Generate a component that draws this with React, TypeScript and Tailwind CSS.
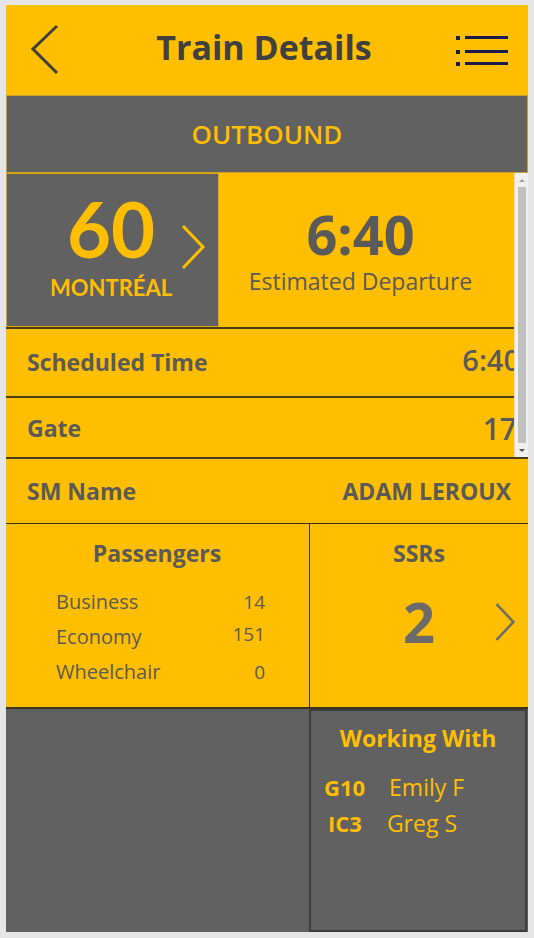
import { ReactNode } from 'react'

const YELLOW = 'bg-[#ffbf00]'

function Chevron({ className, stroke }: { className: string; stroke: string }) {
  return (
    <svg className={className} viewBox="0 0 26 46" fill="none">
      <polyline points="3,2 23,23 3,44" stroke={stroke} strokeWidth="3" strokeLinejoin="miter" />
    </svg>
  )
}

function InfoRow({ label, value, className, valueClass }: { label: string; value: string; className: string; valueClass: string }) {
  return (
    <div className={`flex items-center justify-between pl-[21px] border-t-2 border-[#4a3d1a] ${YELLOW} ${className}`}>
      <span className="text-[23px] font-bold text-[#5a5a5a]">{label}</span>
      <span className={`font-semibold text-[#5a5a5a] ${valueClass}`}>{value}</span>
    </div>
  )
}

function PaxLine({ label, value, nudge }: { label: string; value: string; nudge?: string }) {
  return (
    <div className="flex items-center justify-between h-[35px]">
      <span className="text-[20px] text-[#5a5a5a]">{label}</span>
      <span className={`text-[19px] text-[#5a5a5a] ${nudge ?? ''}`}>{value}</span>
    </div>
  )
}

function Crew({ code, name, codeClass }: { code: string; name: string; codeClass: string }): ReactNode {
  return (
    <div className="flex items-center h-[36px]">
      <span className={`text-[22px] font-bold text-[#ffbf00] ${codeClass}`}>{code}</span>
      <span className="text-[23px] text-[#ffbf00] ml-[24px]">{name}</span>
    </div>
  )
}

export default function App() {
  return (
    <div className="min-h-screen bg-[#e6e6e6] pt-[5px] pl-[6px]" style={{ fontFamily: '"Open Sans", "Liberation Sans", sans-serif' }}>
      <div className="w-[522px] h-[927px] flex flex-col bg-[#616161]">
        {/* header */}
        <div className={`h-[90px] flex items-center justify-between pl-[24px] pr-[18px] shrink-0 ${YELLOW}`}>
          <svg width="30" height="54" viewBox="0 0 30 54" fill="none">
            <polyline points="27,3 3,26 27,50" stroke="#3f3f3f" strokeWidth="3" />
          </svg>
          <h1 className="text-[34px] font-bold leading-[40px] text-[#404040] ml-[14px] mb-[6px]">Train Details</h1>
          <svg width="56" height="34" viewBox="0 0 56 34">
            <rect x="2" y="3" width="4" height="4" fill="#1b1b4b" />
            <rect x="2" y="17" width="4" height="4" fill="#1b1b4b" />
            <rect x="2" y="29" width="4" height="4" fill="#1b1b4b" />
            <rect x="11" y="3" width="43" height="3" fill="#1b1b4b" />
            <rect x="11" y="17" width="43" height="3" fill="#1b1b4b" />
            <rect x="11" y="29" width="43" height="3" fill="#1b1b4b" />
          </svg>
        </div>

        {/* direction */}
        <div className="h-[78px] shrink-0 flex items-center justify-center border border-[#c9a227]">
          <span className="text-[26px] font-semibold text-[#ffbf00]">OUTBOUND</span>
        </div>

        {/* scrolled area */}
        <div className="h-[284px] shrink-0 flex">
          <div className={`flex-1 overflow-hidden ${YELLOW}`}>
            <div className="h-[154px] flex">
              <div className="w-[213px] bg-[#616161] border border-[#e0a800] flex items-center pl-[43px]">
                <div className="flex flex-col items-center mt-[-10px]" style={{ fontFamily: 'Lato, "Open Sans", sans-serif' }}>
                  <span className="text-[76px] font-bold leading-[76px] text-[#ffbf00]">60</span>
                  <span className="text-[22px] font-bold leading-[22px] text-[#ffbf00] mt-[10px]">MONTRÉAL</span>
                </div>
                <Chevron className="w-[26px] h-[46px] ml-[8px] mb-[6px]" stroke="#ffbf00" />
              </div>
              <div className="flex-1 flex flex-col items-center justify-center pr-[12px]">
                <span className="text-[54px] font-bold leading-[60px] text-[#5a5a5a]">6:40</span>
                <span className="text-[23px] leading-[30px] text-[#5a5a5a] mt-[2px]">Estimated Departure</span>
              </div>
            </div>
            <InfoRow label="Scheduled Time" value="6:40" className="h-[69px]" valueClass="text-[29px] mb-[6px] -mr-[6px]" />
            <InfoRow label="Gate" value="17" className="h-[62px]" valueClass="text-[30px] -mr-[3px]" />
          </div>
          <div className="w-[14px] bg-[#f0f0f0] flex flex-col items-center border-l border-[#dcdcdc]">
            <div className="h-[14px] flex items-center justify-center">
              <div className="w-0 h-0 border-l-[3px] border-r-[3px] border-b-[3px] border-l-transparent border-r-transparent border-b-[#a0a0a0]" />
            </div>
            <div className="w-[8px] flex-1 bg-[#c1c1c1]" />
            <div className="h-[14px] flex items-center justify-center">
              <div className="w-0 h-0 border-l-[3px] border-r-[3px] border-t-[3px] border-l-transparent border-r-transparent border-t-[#505050]" />
            </div>
          </div>
        </div>

        {/* SM name */}
        <div className={`h-[66px] shrink-0 flex items-center justify-between pl-[21px] pr-[17px] border-t-2 border-[#4a3d1a] ${YELLOW}`}>
          <span className="text-[23px] font-bold text-[#5a5a5a]">SM Name</span>
          <span className="text-[23px] font-bold text-[#5a5a5a]">ADAM LEROUX</span>
        </div>

        {/* passengers + SSRs */}
        <div className={`h-[186px] shrink-0 flex border-t border-b-2 border-[#3d3320] ${YELLOW}`}>
          <div className="w-[304px] border-r border-[#3d3320] flex flex-col">
            <div className="text-[23px] font-bold text-[#5a5a5a] text-center pt-[12px] pb-[14px] pr-[1px]">Passengers</div>
            <div className="pl-[50px] pr-[44px]">
              <PaxLine label="Business" value="14" />
              <PaxLine label="Economy" value="151" nudge="mb-[6px]" />
              <PaxLine label="Wheelchair" value="0" />
            </div>
          </div>
          <div className="flex-1 relative flex flex-col items-center">
            <div className="text-[23px] font-bold text-[#5a5a5a] pt-[12px]">SSRs</div>
            <div className="text-[56px] font-bold leading-[60px] text-[#6b6b6b] mt-[20px]">2</div>
            <Chevron className="absolute right-[12px] top-[78px] w-[22px] h-[40px]" stroke="#6b6b6b" />
          </div>
        </div>

        {/* bottom */}
        <div className="flex-1 flex">
          <div className="w-[303px] bg-[#616161]" />
          <div className="w-[218px] border-2 border-[#3c3c3c] bg-[#616161] flex flex-col">
            <div className="text-[23px] font-bold text-[#ffbf00] text-center pt-[10px] pb-[14px]">Working With</div>
            <div className="pl-[13px]">
              <Crew code="G10" name="Emily F" codeClass="" />
              <Crew code="IC3" name="Greg S" codeClass="pl-[4px] pr-[1px]" />
            </div>
          </div>
        </div>
      </div>
    </div>
  )
}
